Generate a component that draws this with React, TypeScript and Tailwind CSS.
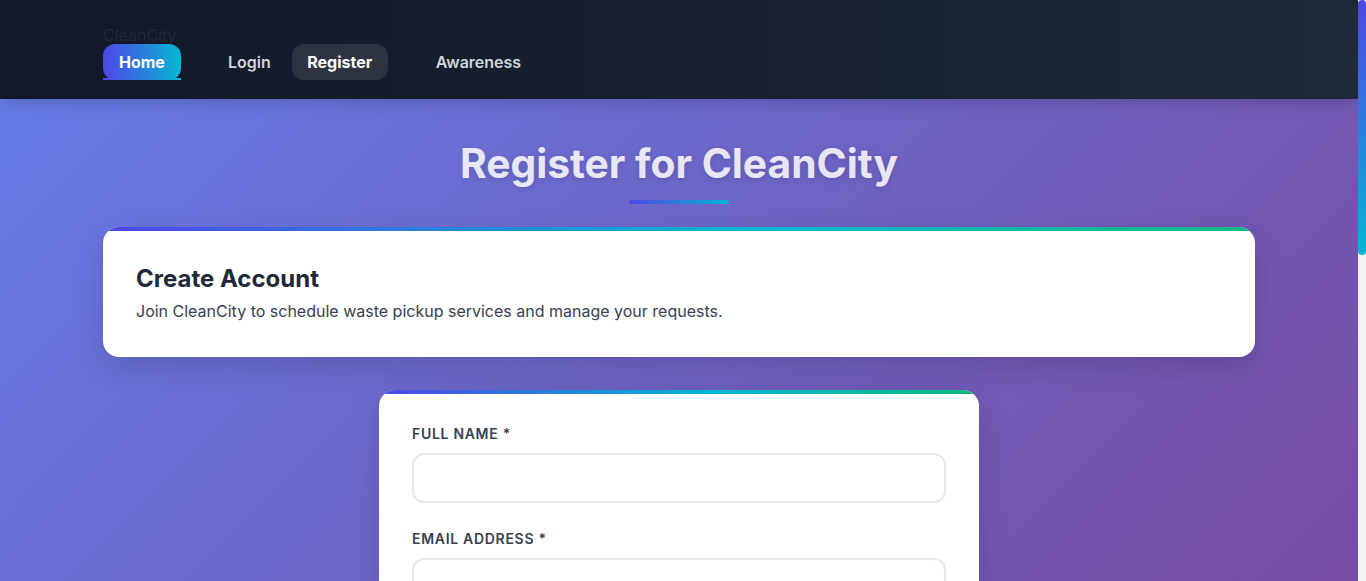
import React from 'react';

const fields = [
  { label: 'Full Name', type: 'text' },
  { label: 'Email Address', type: 'email' },
  { label: 'Phone Number', type: 'tel' },
  { label: 'Address', type: 'text' },
  { label: 'Password', type: 'password' },
  { label: 'Confirm Password', type: 'password' },
];

function GradientTop() {
  return (
    <div className="absolute left-0 right-0 top-0 h-1 bg-[linear-gradient(90deg,#4f46e5,#06b6d4_55%,#10b981)]" />
  );
}

export default function App() {
  return (
    <div className="flex h-screen bg-[linear-gradient(135deg,#667eea_0%,#764ba2_100%)] font-['Inter','Liberation_Sans',sans-serif]">
      <div className="min-w-0 flex-1 overflow-y-auto [scrollbar-width:none]">
        <header className="bg-[linear-gradient(90deg,#111827,#1f2937)] shadow-lg">
          <div className="mx-auto max-w-6xl pt-[27px] pb-[19px]">
            <div className="text-base leading-[17px] text-[#212a3a]">CleanCity</div>
            <nav className="flex items-center">
              <a className="relative flex h-9 items-center rounded-xl bg-[linear-gradient(90deg,#4f46e5,#06b6d4)] px-4 text-base font-bold text-white">
                Home
                <span className="absolute bottom-0 left-0 right-0 h-[2px] bg-[linear-gradient(90deg,#4f46e5,#06b6d4)]" />
              </a>
              <a className="ml-[31px] flex h-9 items-center rounded-xl px-4 text-base font-semibold text-[#d1d5db]">
                Login
              </a>
              <a className="ml-[5px] flex h-9 w-[96px] items-center justify-center rounded-xl bg-[#2d3341] text-base font-bold text-white">
                Register
              </a>
              <a className="ml-[32px] flex h-9 items-center rounded-xl px-4 text-base font-semibold text-[#d1d5db]">
                Awareness
              </a>
            </nav>
          </div>
        </header>

        <main className="mx-auto max-w-6xl pb-8">
          <div className="flex flex-col items-center pt-[41px]">
            <h1 className="text-[40.75px] font-bold leading-[48px] text-white/85 [text-shadow:0_2px_6px_rgba(0,0,0,0.15)]">
              Register for CleanCity
            </h1>
            <div className="mt-[12px] h-1 w-[100px] rounded-full bg-[linear-gradient(90deg,#4f46e5,#06b6d4)]" />
          </div>

          <section className="relative mt-[23px] overflow-hidden rounded-2xl bg-white px-[33px] pb-[33px] pt-9 shadow-[0_10px_30px_rgba(0,0,0,0.15)]">
            <GradientTop />
            <h2 className="text-2xl font-bold leading-8 text-[#1f2937]">Create Account</h2>
            <p className="mt-[3px] text-base leading-[26px] text-[#374151]">
              Join CleanCity to schedule waste pickup services and manage your requests.
            </p>
          </section>

          <form className="relative mx-auto mt-[33px] w-[600px] overflow-hidden rounded-2xl bg-white px-[33px] pb-8 pt-[33px] shadow-[0_10px_30px_rgba(0,0,0,0.15)]">
            <GradientTop />
            {fields.map((f) => (
              <div key={f.label} className="mb-[25px]">
                <label className="mb-[9px] block text-sm font-semibold uppercase leading-[21px] tracking-[0.05em] text-[#374151]">
                  {f.label} *
                </label>
                <input
                  type={f.type}
                  className="block h-[50px] w-full rounded-xl border-2 border-[#e5e7eb] px-4 text-base outline-none"
                />
              </div>
            ))}
            <button
              type="button"
              className="mt-2 h-[52px] w-full rounded-xl bg-[linear-gradient(90deg,#4f46e5,#06b6d4)] text-base font-bold text-white"
            >
              Create Account
            </button>
            <p className="mt-4 text-center text-sm text-[#6b7280]">
              Already have an account? <span className="font-semibold text-[#4f46e5]">Login here</span>
            </p>
          </form>
        </main>

        <footer className="bg-[#111827] py-10 text-center text-sm text-[#9ca3af]">
          © 2024 CleanCity. All rights reserved.
        </footer>
      </div>

      <div className="w-2 shrink-0 bg-[#f1f2f4]">
        <div className="h-[255px] rounded-full bg-[linear-gradient(180deg,#4f46e5,#06b6d4)]" />
      </div>
    </div>
  );
}
